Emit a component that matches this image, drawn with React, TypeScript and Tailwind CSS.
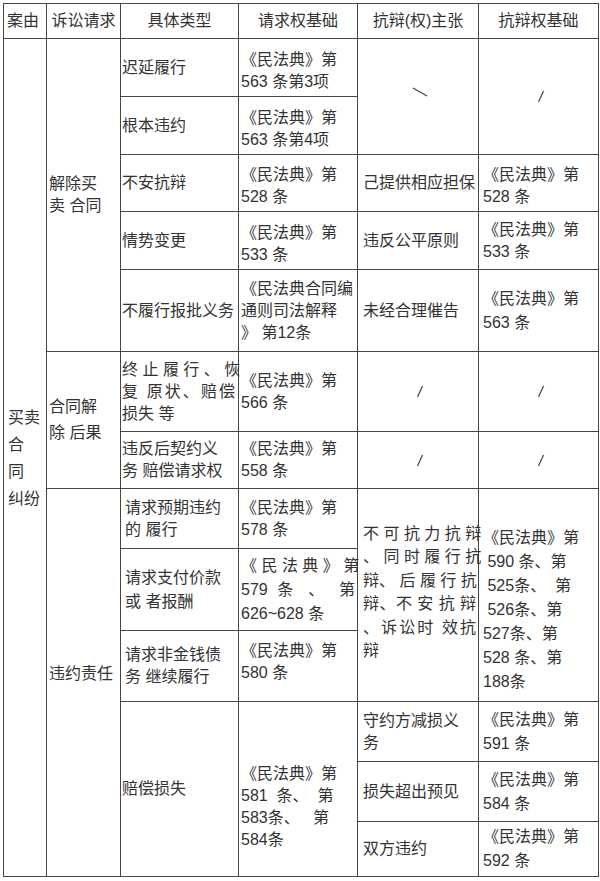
import type { ReactNode } from "react";

const font = { fontFamily: '"Liberation Sans", "Noto Sans CJK SC", sans-serif' };

// one line per entry; keeps the wrapping of the original table
function Lines({ lines, className = "" }: { lines: string[]; className?: string }) {
  return (
    <div className={"leading-[22px] " + className}>
      {lines.map((l, i) => (
        <div key={i} className="whitespace-pre">{l}</div>
      ))}
    </div>
  );
}

// line spread over the whole cell width
function Spread({ children }: { children: ReactNode }) {
  return <div className="whitespace-nowrap text-justify [text-align-last:justify]">{children}</div>;
}

function Slash({ back = false }: { back?: boolean }) {
  return back ? (
    <svg width="16" height="12" viewBox="0 0 16 12" className="mx-auto -mt-[10px]">
      <line x1="1" y1="2" x2="15" y2="10" stroke="#444" strokeWidth="1.2" />
    </svg>
  ) : (
    <svg width="8" height="13" viewBox="0 0 8 13" className="mx-auto">
      <line x1="1.5" y1="12" x2="6.5" y2="1" stroke="#444" strokeWidth="1.2" />
    </svg>
  );
}

const td = "border border-[#454545] align-middle p-0";
const c1 = td + " pl-[4px]";
const c2 = td + " pl-[2px]";
const c3 = td + " pl-[1px] pr-[3px]";
const c4 = td + " pl-[2px] pr-[2px]";
const c5 = td + " pl-[5px] pr-[2px]";
const c6 = td + " pl-[4px]";

const law = (n: string) => ["《民法典》第", n];

export default function App() {
  return (
    <div className="bg-white w-[600px] h-[881px] pt-[3px] pl-[3px] text-[16px] text-[#333]" style={font}>
      <table className="table-fixed border-collapse w-[595px]">
        <colgroup>
          <col className="w-[43px]" />
          <col className="w-[74px]" />
          <col className="w-[118px]" />
          <col className="w-[119px]" />
          <col className="w-[121px]" />
          <col className="w-[120px]" />
        </colgroup>
        <tbody>
          <tr className="h-[35px]">
            <td className={td + " pl-[3px]"}>案由</td>
            <td className={td + " text-center"}>诉讼请求</td>
            <td className={td + " text-center"}>具体类型</td>
            <td className={td + " text-center"}>请求权基础</td>
            <td className={td + " text-center"}>抗辩(权)主张</td>
            <td className={td + " text-center"}>抗辩权基础</td>
          </tr>

          <tr className="h-[58px]">
            <td rowSpan={13} className={c1}>
              <Lines lines={["买卖", "合", "同", "纠纷"]} className="leading-[27px]" />
            </td>
            <td rowSpan={5} className={c2}>
              <Lines lines={["解除买", "卖 合同"]} className="leading-[21px]" />
            </td>
            <td className={c3}>迟延履行</td>
            <td className={c4}><Lines lines={law("563 条第3项")} className="pt-[6px]" /></td>
            <td rowSpan={2} className={c5 + " text-center"}><Slash back /></td>
            <td rowSpan={2} className={c6 + " text-center"}><Slash /></td>
          </tr>
          <tr className="h-[58px]">
            <td className={c3}>根本违约</td>
            <td className={c4}><Lines lines={law("563 条第4项")} className="pt-[6px]" /></td>
          </tr>
          <tr className="h-[57px]">
            <td className={c3}>不安抗辩</td>
            <td className={c4}><Lines lines={law("528 条")} className="pt-[6px]" /></td>
            <td className={c5 + " pl-[4px] pr-0"}>己提供相应担保</td>
            <td className={c6}><Lines lines={law("528 条")} className="pt-[6px]" /></td>
          </tr>
          <tr className="h-[58px]">
            <td className={c3}>情势变更</td>
            <td className={c4}><Lines lines={law("533 条")} className="pt-[6px]" /></td>
            <td className={c5}>违反公平原则</td>
            <td className={c6}><Lines lines={law("533 条")} /></td>
          </tr>
          <tr className="h-[82px]">
            <td className={c3}>不履行报批义务</td>
            <td className={c4}>
              <Lines lines={["《民法典合同编", "通则司法解释", "》 第12条"]} className="leading-[21px]" />
            </td>
            <td className={c5}>未经合理催告</td>
            <td className={c6}><Lines lines={law("563 条")} className="leading-[24px]" /></td>
          </tr>

          <tr className="h-[80px]">
            <td rowSpan={2} className={c2}>
              <Lines lines={["合同解", "除 后果"]} className="leading-[26px]" />
            </td>
            <td className={c3 + " leading-[22px]"}>
              <Spread>终 止 履 行 、 恢</Spread>
              <Spread>复 原状、赔偿</Spread>
              <div className="whitespace-pre">损失 等</div>
            </td>
            <td className={c4}><Lines lines={law("566 条")} /></td>
            <td className={c5 + " text-center"}><Slash /></td>
            <td className={c6 + " text-center"}><Slash /></td>
          </tr>
          <tr className="h-[57px]">
            <td className={c3}><Lines lines={["违反后契约义", "务 赔偿请求权"]} /></td>
            <td className={c4}><Lines lines={law("558 条")} /></td>
            <td className={c5 + " text-center"}><Slash /></td>
            <td className={c6 + " text-center"}><Slash /></td>
          </tr>

          <tr className="h-[60px]">
            <td rowSpan={6} className={c2 + " pb-[18px]"}>违约责任</td>
            <td className={c3 + " pl-[4px]"}><Lines lines={["请求预期违约", "的 履行"]} /></td>
            <td className={c4}><Lines lines={law("578 条")} /></td>
            <td rowSpan={3} className={c5 + " pl-[4px] pr-[1px] pb-[6px]"}>
              <div className="leading-[23.5px]">
                <Spread>不 可 抗 力 抗 辩</Spread>
                <Spread>、 同 时 履 行 抗</Spread>
                <Spread>辩、 后 履 行 抗</Spread>
                <Spread>辩、不 安 抗 辩</Spread>
                <Spread>、诉讼时 效抗</Spread>
                <div>辩</div>
              </div>
            </td>
            <td rowSpan={3} className={c6 + " pt-[30px]"}>
              <Lines
                lines={["《民法典》第", " 590 条、第", " 525条、  第", " 526条、第", "527条、第", "528 条、第", "188条"]}
                className="leading-[24px]"
              />
            </td>
          </tr>
          <tr className="h-[82px]">
            <td className={c3 + " pl-[4px]"}><Lines lines={["请求支付价款", "或 者报酬"]} className="leading-[24px]" /></td>
            <td className={c4 + " leading-[24px]"}>
              <Spread>《 民 法 典 》 第</Spread>
              <Spread>579 条 、 第</Spread>
              <div>626~628 条</div>
            </td>
          </tr>
          <tr className="h-[71px]">
            <td className={c3 + " pl-[4px]"}><Lines lines={["请求非金钱债", "务 继续履行"]} /></td>
            <td className={c4}><Lines lines={law("580 条")} className="pb-[8px]" /></td>
          </tr>

          <tr className="h-[60px]">
            <td rowSpan={3} className={c3}>赔偿损失</td>
            <td rowSpan={3} className={c4 + " pt-[36px]"}>
              <Lines lines={["《民法典》第", "581  条、  第", "583条、   第", "584条"]} className="leading-[21px]" />
            </td>
            <td className={c5}><Lines lines={["守约方减损义", "务"]} className="leading-[21px]" /></td>
            <td className={c6}><Lines lines={law("591 条")} className="leading-[24px]" /></td>
          </tr>
          <tr className="h-[60px]">
            <td className={c5}>损失超出预见</td>
            <td className={c6}><Lines lines={law("584 条")} className="leading-[24px]" /></td>
          </tr>
          <tr className="h-[55px]">
            <td className={c5}>双方违约</td>
            <td className={c6}><Lines lines={law("592 条")} className="leading-[24px]" /></td>
          </tr>
        </tbody>
      </table>
    </div>
  );
}
